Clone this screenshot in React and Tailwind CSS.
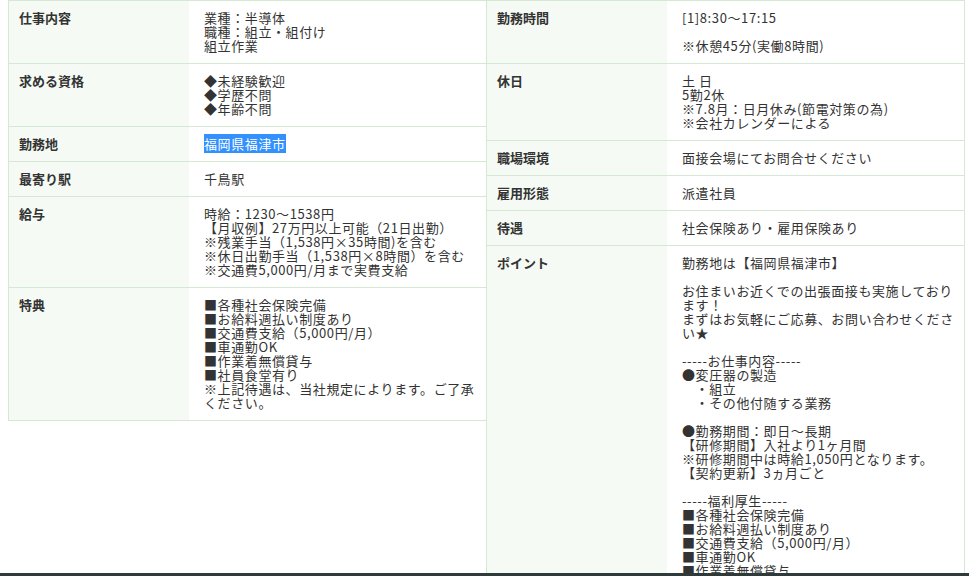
const L = [
  ["仕事内容", "業種：半導体\n職種：組立・組付け\n組立作業"],
  ["求める資格", "◆未経験歓迎\n◆学歴不問\n◆年齢不問"],
  ["勤務地", "SEL"],
  ["最寄り駅", "千鳥駅"],
  ["給与", "時給：1230～1538円\n【月収例】27万円以上可能（21日出勤）\n※残業手当（1,538円×35時間)を含む\n※休日出勤手当（1,538円×8時間）を含む\n※交通費5,000円/月まで実費支給"],
  ["特典", "■各種社会保険完備\n■お給料週払い制度あり\n■交通費支給（5,000円/月）\n■車通勤OK\n■作業着無償貸与\n■社員食堂有り\n※上記待遇は、当社規定によります。ご了承ください。"],
];
const R = [
  ["勤務時間", "[1]8:30～17:15\n\n※休憩45分(実働8時間)"],
  ["休日", "土 日\n5勤2休\n※7.8月：日月休み(節電対策の為)\n※会社カレンダーによる"],
  ["職場環境", "面接会場にてお問合せください"],
  ["雇用形態", "派遣社員"],
  ["待遇", "社会保険あり・雇用保険あり"],
  ["ポイント", "勤務地は【福岡県福津市】\n\nお住まいお近くでの出張面接も実施しております！\nまずはお気軽にご応募、お問い合わせください★\n\n-----お仕事内容-----\n●変圧器の製造\n　・組立\n　・その他付随する業務\n\n●勤務期間：即日～長期\n【研修期間】入社より1ヶ月間\n※研修期間中は時給1,050円となります。\n【契約更新】3ヵ月ごと\n\n-----福利厚生-----\n■各種社会保険完備\n■お給料週払い制度あり\n■交通費支給（5,000円/月）\n■車通勤OK\n■作業着無償貸与\n■社員食堂有り"],
];
function Table({ rows, grow }) {
  return (
    <div className="flex flex-col w-[479px] border-t border-l border-[#d5e8d4] h-full">
      {rows.map(([k, v], i) => (
        <div key={i} className={`flex border-b border-r border-[#d5e8d4] ${grow && i === rows.length - 1 ? "flex-1" : ""}`}>
          <div className="w-[180px] shrink-0 bg-[#f5fbf4] pl-[10px] pt-[10px] font-bold">{k}</div>
          <div className="flex-1 pl-[15px] pr-[10px] py-[10px] whitespace-pre-wrap tracking-[0.6px]">
            {v === "SEL" ? <span className="bg-[#3390ff] text-white">福岡県福津市</span> : v}
          </div>
        </div>
      ))}
    </div>
  );
}
export default function App() {
  return (
    <div className="w-[969px] h-[576px] overflow-hidden bg-white relative text-[13px] leading-[14px] text-[#333]" style={{ fontFamily: '"Noto Sans CJK JP", sans-serif' }}>
      <div className="flex pl-[8px] items-start">
        <Table rows={L} />
        <div className="h-[700px] -ml-px">
          <Table rows={R} grow />
        </div>
      </div>
      <div className="absolute left-0 right-0 bottom-0 h-[3px] bg-[#2f3b3b]" />
    </div>
  );
}
